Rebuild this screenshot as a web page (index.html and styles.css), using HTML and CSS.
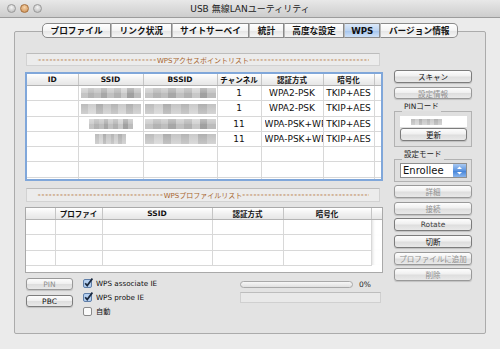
FILE: index.html
```html
<!DOCTYPE html>
<html lang="ja">

<head>
  <meta charset="UTF-8">
  <title>USB 無線LANユーティリティ</title>
  <link rel="stylesheet" href="styles.css">
</head>

<body>
  <div class="window">
    <div class="titlebar">
      <div class="lights">
        <span class="light"></span>
        <span class="light minimize"></span>
        <span class="light"></span>
      </div>
      <div class="title">USB 無線LANユーティリティ</div>
      <div></div>
    </div>

    <div class="content">
      <div class="tabs">
        <div class="tab">プロファイル</div>
        <div class="tab">リンク状況</div>
        <div class="tab">サイトサーベイ</div>
        <div class="tab">統計</div>
        <div class="tab">高度な設定</div>
        <div class="tab selected">WPS</div>
        <div class="tab">バージョン情報</div>
      </div>

      <div class="tabbox">
        <div class="left-pane">
          <div class="list-title">
            <div class="dashes"><span class="dash-run">----------------------------------------</span> WPSアクセスポイントリスト <span class="dash-run">----------------------------------------</span></div>
          </div>

          <div class="ap-list">
            <table class="grid">
              <colgroup>
                <col class="w51"><col class="w65"><col class="w74"><col class="w44"><col class="w62"><col class="w51"><col class="w7">
              </colgroup>
              <thead>
                <tr><th>ID</th><th>SSID</th><th>BSSID</th><th>チャンネル</th><th>認証方式</th><th>暗号化</th><th></th></tr>
              </thead>
              <tbody>
                <tr><td></td><td><span class="mosaic m60"></span></td><td><span class="mosaic mac"></span></td><td>1</td><td>WPA2-PSK</td><td>TKIP+AES</td><td></td></tr>
                <tr><td></td><td><span class="mosaic m60 alt"></span></td><td><span class="mosaic mac alt"></span></td><td>1</td><td>WPA2-PSK</td><td>TKIP+AES</td><td></td></tr>
                <tr><td></td><td><span class="mosaic m44"></span></td><td><span class="mosaic mac"></span></td><td>11</td><td><div class="clip">WPA-PSK+WPA2-PSK</div></td><td>TKIP+AES</td><td></td></tr>
                <tr><td></td><td><span class="mosaic m31 alt"></span></td><td><span class="mosaic mac alt"></span></td><td>11</td><td><div class="clip">WPA-PSK+WPA2-PSK</div></td><td>TKIP+AES</td><td></td></tr>
                <tr><td></td><td></td><td></td><td></td><td></td><td></td><td></td></tr>
                <tr><td></td><td></td><td></td><td></td><td></td><td></td><td></td></tr>
                <tr><td></td><td></td><td></td><td></td><td></td><td></td><td></td></tr>
              </tbody>
            </table>
          </div>

          <div class="list-title second">
            <div class="dashes"><span class="dash-run">----------------------------------------</span> WPSプロファイルリスト <span class="dash-run">----------------------------------------</span></div>
          </div>

          <div class="profile-list">
            <table class="grid">
              <colgroup>
                <col class="w29"><col class="w47"><col class="w110"><col class="w71"><col class="w88"><col class="w11">
              </colgroup>
              <thead>
                <tr><th></th><th>プロファイ</th><th>SSID</th><th>認証方式</th><th>暗号化</th><th></th></tr>
              </thead>
              <tbody>
                <tr><td></td><td></td><td></td><td></td><td></td><td class="filler"></td></tr>
                <tr><td></td><td></td><td></td><td></td><td></td><td class="filler"></td></tr>
                <tr><td></td><td></td><td></td><td></td><td></td><td class="filler"></td></tr>
              </tbody>
            </table>
          </div>

          <div class="controls">
            <div class="pin-buttons">
              <div class="btn disabled">PIN</div>
              <div class="btn">PBC</div>
            </div>
            <div class="checks">
              <div class="check">
                <svg class="box" width="10" height="10" viewBox="0 0 10 10">
                  <rect x="0.5" y="1.5" width="8" height="8" rx="1.5" fill="#b4cff0" stroke="#5f7ea8"/>
                  <path d="M2.2 5.2 L4.2 7.6 L9.4 0.6" stroke="#1b2a40" stroke-width="1.7" fill="none"/>
                </svg>
                <span>WPS associate IE</span>
              </div>
              <div class="check">
                <svg class="box" width="10" height="10" viewBox="0 0 10 10">
                  <rect x="0.5" y="1.5" width="8" height="8" rx="1.5" fill="#b4cff0" stroke="#5f7ea8"/>
                  <path d="M2.2 5.2 L4.2 7.6 L9.4 0.6" stroke="#1b2a40" stroke-width="1.7" fill="none"/>
                </svg>
                <span>WPS probe IE</span>
              </div>
              <div class="check">
                <svg class="box" width="10" height="10" viewBox="0 0 10 10">
                  <rect x="0.5" y="1.5" width="8" height="8" rx="1.5" fill="#fafafa" stroke="#8a8a8a"/>
                </svg>
                <span>自動</span>
              </div>
            </div>
            <div class="progress-area">
              <div class="progress">
                <div class="progress-track"></div>
                <span class="percent">0%</span>
              </div>
              <div class="status-field"></div>
            </div>
          </div>
        </div>

        <div class="right-pane">
          <div class="btn">スキャン</div>
          <div class="btn disabled short">設定情報</div>

          <fieldset class="group pin-group">
            <legend>PINコード</legend>
            <div class="pin-field"><span class="mosaic m31 alt"></span></div>
            <div class="btn">更新</div>
          </fieldset>

          <fieldset class="group mode-group">
            <legend>設定モード</legend>
            <div class="popup">
              <span class="popup-text">Enrollee</span>
              <span class="popup-arrow">
                <svg width="7" height="9" viewBox="0 0 7 9">
                  <path d="M1 3 L3.5 0.5 L6 3 Z" fill="#fff"/>
                  <path d="M1 6 L3.5 8.5 L6 6 Z" fill="#fff"/>
                </svg>
              </span>
            </div>
          </fieldset>

          <div class="btn-stack">
            <div class="btn disabled">詳細</div>
            <div class="btn disabled">接続</div>
            <div class="btn dim">Rotate</div>
            <div class="btn">切断</div>
            <div class="btn disabled">プロファイルに追加</div>
            <div class="btn disabled">削除</div>
          </div>
        </div>
      </div>
    </div>
  </div>
</body>

</html>
```

FILE: styles.css
```css
html,
body {
  margin: 0;
}

body {
  width: 500px;
  height: 349px;
  overflow: hidden;
  font-family: "DejaVu Sans", "Noto Sans CJK JP", sans-serif;
  font-size: 9px;
  color: #111;
  background: #ebebeb;
}

.window {
  height: 349px;
  display: flex;
  flex-direction: column;
}

/* title bar */
.titlebar {
  height: 18px;
  box-sizing: border-box;
  display: grid;
  grid-template-columns: 1fr auto 1fr;
  align-items: center;
  background: linear-gradient(#e8e8e8, #cdcdcd);
  border-bottom: 1px solid #9c9c9c;
}

.lights {
  display: flex;
  gap: 4px;
  padding-left: 7px;
}

.light {
  width: 9px;
  height: 9px;
  box-sizing: border-box;
  border-radius: 50%;
  border: 1px solid #999;
  background: radial-gradient(circle at 50% 35%, #f4f4f4, #b3b3b3);
}

.light.minimize {
  border-color: #a6703e;
  background: radial-gradient(circle at 50% 35%, #f7d5ac, #c8884a);
}

.title {
  font-size: 9px;
  color: #222;
}

/* tabs */
.content {
  flex: 1;
  display: flex;
  flex-direction: column;
  padding: 5px 14px 15px;
}

.tabs {
  display: flex;
  justify-content: center;
  position: relative;
  z-index: 1;
  margin-bottom: -7px;
}

.tab {
  height: 15px;
  box-sizing: border-box;
  padding: 0 7.5px;
  display: flex;
  align-items: center;
  font-size: 8.7px;
  font-weight: bold;
  border: 1px solid #8a8a8a;
  border-left: 1px solid #b9b9b9;
  background: linear-gradient(#ffffff, #f4f4f4 50%, #e4e4e4 51%, #f6f6f6);
}

.tab:first-child {
  border-left-color: #8a8a8a;
  border-radius: 5px 0 0 5px;
}

.tab:last-child {
  border-radius: 0 5px 5px 0;
}

.tab.selected {
  padding: 0 6px;
  background: linear-gradient(#dce9f9, #bcd4f2 50%, #a2c3ed 51%, #d0e2f8);
}

.tabbox {
  flex: 1;
  display: flex;
  padding: 21px 13px 0 10px;
  border: 1px solid #ababab;
  border-radius: 2px;
  background: #e3e3e3;
}

/* left side */
.left-pane {
  width: 358px;
  display: flex;
  flex-direction: column;
}

.list-title {
  height: 11px;
  margin: 0 3px 0 1px;
  padding: 0 10px;
  display: flex;
  align-items: center;
  border: 1px solid #d2d2d2;
  border-top-color: #bcbcbc;
  background: #ececec;
}

.list-title.second {
  height: 12px;
  margin-top: 7px;
}

.dashes {
  width: 100%;
  overflow: hidden;
  display: flex;
  justify-content: center;
  align-items: center;
  white-space: nowrap;
  font-size: 7px;
  color: #a8662c;
}

.dash-run {
  font-weight: bold;
  letter-spacing: 0.8px;
  color: #c08a5a;
}

.ap-list {
  margin-top: 6px;
  height: 109px;
  box-sizing: border-box;
  border: 2px solid #80a7da;
  overflow: hidden;
  background: #fff;
}

.profile-list {
  margin-top: 5px;
  height: 66px;
  box-sizing: border-box;
  border: 1px solid #a9a9a9;
  overflow: hidden;
  background: #fff;
}

.grid {
  width: 100%;
  table-layout: fixed;
  border-collapse: collapse;
}

.grid th {
  height: 10px;
  padding: 0;
  font-size: 7.5px;
  font-weight: bold;
  white-space: nowrap;
  overflow: hidden;
  background: linear-gradient(#ffffff, #f1f1f1 50%, #e6e6e6);
  border-right: 1px solid #c5c5c5;
  border-bottom: 1px solid #b4b4b4;
}

.grid td {
  height: 14.3px;
  padding: 0;
  text-align: center;
  white-space: nowrap;
  overflow: hidden;
  border-right: 1px solid #d8d8d8;
  border-bottom: 1px solid #d8d8d8;
}

.clip {
  width: 58px;
  margin-left: 3px;
  overflow: hidden;
  text-align: left;
}

.grid td.filler {
  border-bottom: none;
  border-left: 1px solid #d0d0d0;
  box-shadow: inset 3px 0 3px -2px rgba(0, 0, 0, 0.12);
}

.w51 { width: 51px; }
.w65 { width: 65px; }
.w74 { width: 74px; }
.w44 { width: 44px; }
.w62 { width: 62px; }
.w7 { width: 7px; }
.w29 { width: 29px; }
.w47 { width: 47px; }
.w110 { width: 110px; }
.w71 { width: 71px; }
.w88 { width: 88px; }
.w11 { width: 11px; }

/* pixelated (hidden) values */
.mosaic {
  display: inline-block;
  height: 10px;
  vertical-align: middle;
  background:
    linear-gradient(rgba(255, 255, 255, 0.25), rgba(255, 255, 255, 0) 50%, rgba(0, 0, 0, 0.05) 51%),
    linear-gradient(90deg, #cfcfcf 0 11%, #bdbdbd 11% 22%, #c8c8c8 22% 33%, #b0b0b0 33% 44%, #cbcbcb 44% 55%, #bababa 55% 66%, #d3d3d3 66% 77%, #a9a9a9 77% 88%, #c6c6c6 88% 100%);
}

.mosaic.alt {
  background:
    linear-gradient(rgba(0, 0, 0, 0.04), rgba(255, 255, 255, 0.2)),
    linear-gradient(90deg, #c4c4c4 0 12%, #d6d6d6 12% 25%, #b4b4b4 25% 37%, #cdcdcd 37% 50%, #bcbcbc 50% 62%, #d2d2d2 62% 75%, #b7b7b7 75% 87%, #cacaca 87% 100%);
}

.m60 { width: 60px; }
.m44 { width: 44px; }
.m31 { width: 31px; }
.mac { width: 71px; }

/* bottom controls */
.controls {
  margin-top: 5px;
  display: flex;
}

.pin-buttons {
  width: 47px;
  margin-left: 1px;
  display: flex;
  flex-direction: column;
  gap: 5px;
}

.pin-buttons .btn {
  height: 12px;
}

.checks {
  margin-left: 10px;
  display: flex;
  flex-direction: column;
  gap: 4px;
}

.check {
  height: 10px;
  display: flex;
  align-items: center;
  gap: 3px;
  font-size: 7.2px;
  color: #111;
}

.progress-area {
  width: 141px;
  margin-left: auto;
  margin-right: 2px;
  padding-top: 3px;
}

.progress {
  display: flex;
  align-items: center;
  gap: 6px;
  height: 7px;
}

.progress-track {
  width: 113px;
  flex: none;
  height: 7px;
  box-sizing: border-box;
  border: 1px solid #a9a9a9;
  border-radius: 4px;
  background: linear-gradient(#f7f7f7, #e0e0e0);
}

.percent {
  font-size: 7.5px;
  color: #222;
}

.status-field {
  margin-top: 4px;
  height: 11px;
  box-sizing: border-box;
  border: 1px solid #d0d0d0;
  border-top-color: #bdbdbd;
  background: #e9e9e9;
}

/* right side */
.right-pane {
  width: 78px;
  margin-left: 11px;
  padding-top: 17px;
  display: flex;
  flex-direction: column;
}

.btn {
  height: 13px;
  box-sizing: border-box;
  display: flex;
  align-items: center;
  justify-content: center;
  font-size: 7.5px;
  white-space: nowrap;
  color: #111;
  border: 1px solid #7c7c7c;
  border-radius: 3px;
  background: linear-gradient(#fdfdfd, #f0f0f0 45%, #dedede 55%, #e9e9e9);
  box-shadow: 0 1px 1px rgba(0, 0, 0, 0.15);
}

.btn.short {
  height: 12px;
  margin-top: 4px;
}

.btn.disabled {
  color: #8f8f8f;
  border-color: #999;
}

.btn.dim {
  color: #444;
}

.group {
  margin: 4px 0 0;
  padding: 0 4px 5px 5px;
  border: 1px solid #b2b2b2;
  background: #dfdfdf;
}

.group legend {
  margin-left: 2px;
  padding: 0 2px 8px;
  line-height: 8px;
  font-size: 7.5px;
  color: #222;
}

.pin-field {
  height: 11px;
  margin-top: -3px;
  padding-left: 11px;
  display: flex;
  align-items: center;
  background: #fff;
}

.pin-field .mosaic {
  height: 6px;
}

.pin-group .btn {
  margin-top: 1px;
}

.mode-group {
  padding-bottom: 3px;
}

.popup {
  height: 15px;
  margin-top: -4px;
  box-sizing: border-box;
  display: flex;
  align-items: stretch;
  border: 1px solid #8f8f8f;
  background: #fff;
}

.popup-text {
  flex: 1;
  display: flex;
  align-items: center;
  padding-left: 2px;
  font-size: 10px;
}

.popup-arrow {
  width: 13px;
  display: flex;
  align-items: center;
  justify-content: center;
  background: linear-gradient(#a9c9f2, #5d95e0 50%, #3f7fd6 51%, #8ab6ee);
}

.btn-stack {
  margin-top: 3px;
  display: flex;
  flex-direction: column;
  gap: 3.7px;
}
```
